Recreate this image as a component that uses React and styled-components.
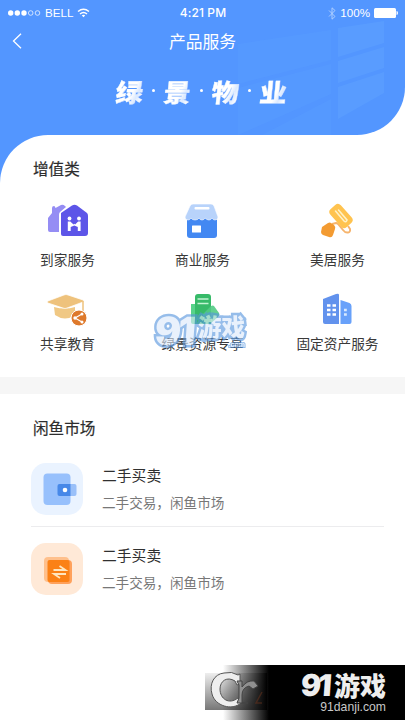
import styled, { createGlobalStyle } from "styled-components";

const GlobalStyle = createGlobalStyle`
  * {
    box-sizing: border-box;
    margin: 0;
    padding: 0;
  }

  body {
    background: #fff;
    color: #333;
    font-family: "Noto Sans CJK SC", sans-serif;
    overflow: hidden;
  }
`;

const Page = styled.main`
  position: relative;
  width: 405px;
  height: 720px;
  overflow: hidden;
  background: #fff;
`;

const Hero = styled.header`
  position: relative;
  height: 135px;
  background: #5396ff;
  border-bottom-right-radius: 48px;
  overflow: hidden;
  color: #fff;
`;

const WindowLight = styled.svg`
  position: absolute;
  inset: 0;
`;

const StatusBar = styled.div`
  position: relative;
  display: grid;
  grid-template-columns: 1fr auto 1fr;
  align-items: center;
  height: 26px;
  padding: 0 7px 0 8px;
  font: 12px/26px "Liberation Sans", sans-serif;
`;

const StatusGroup = styled.div`
  display: flex;
  align-items: center;
  justify-content: ${(props) => (props.$end ? "flex-end" : "flex-start")};
  gap: 4px;

  svg {
    flex: none;
  }
`;

const Carrier = styled.span`
  font-size: 11.6px;
`;

const Time = styled.span`
  font-family: Inter, sans-serif;
  font-size: 12px;
  font-weight: 500;
  letter-spacing: 0.1px;
`;

const NavBar = styled.nav`
  position: relative;
  display: grid;
  grid-template-columns: 40px 1fr 40px;
  align-items: center;
  height: 30px;
  text-align: center;
`;

const BackButton = styled.button`
  display: flex;
  padding-left: 12px;
  border: 0;
  background: none;
`;

const NavTitle = styled.h1`
  font-size: 16.8px;
  font-weight: 400;
  line-height: 30px;
`;

const Brand = styled.div`
  position: relative;
  display: flex;
  justify-content: center;
  align-items: center;
  height: 69px;
  padding-right: 2px;
`;

const BrandChar = styled.span`
  width: 27px;
  text-align: center;
  font-size: 25px;
  font-weight: 900;
  line-height: 36px;
  transform: skewX(-6deg) scaleX(1.08);
  background: linear-gradient(110deg, #fff 58%, #dbe9ff 72%, #fff 88%);
  background-clip: text;
  color: transparent;
  -webkit-text-stroke: 0.3px #ffffffb0;
`;

const BrandDot = styled.i`
  width: 3px;
  height: 3px;
  margin: 0 9px;
  border-radius: 50%;
  background: #fff;
`;

const CornerBack = styled.div`
  background: linear-gradient(90deg, #5396ff 50px, #fff 50px);
`;

const Services = styled.section`
  position: relative;
  height: 242px;
  padding-top: 21px;
  background: #fff;
  border-top-left-radius: 48px;
`;

const SectionTitle = styled.h2`
  padding-left: 33px;
  font-size: 15.6px;
  font-weight: 400;
  line-height: 24px;
  color: #2d2d2d;
  -webkit-text-stroke: 0.2px #2d2d2d;
`;

const ServiceGrid = styled.div`
  display: grid;
  grid-template-columns: repeat(3, 135px);
  grid-auto-rows: 89px;
  padding-top: 24px;
`;

const Service = styled.div`
  display: flex;
  flex-direction: column;
  align-items: center;

  svg {
    display: block;
    overflow: visible;
  }
`;

const ServiceLabel = styled.span`
  margin-top: ${(props) => (props.$tight ? "2px" : "7px")};
  font-size: 13.7px;
  line-height: 24px;
  white-space: nowrap;
  color: #393939;
`;

const Watermark = styled.div`
  position: absolute;
  left: 155px;
  top: 174px;
  display: flex;
  align-items: center;
  height: 44px;
  opacity: 0.62;
  color: #dceafb;
  font-weight: 900;
  paint-order: stroke fill;
  -webkit-text-stroke: 5px #5795de;
  line-height: 44px;
`;

const WatermarkNumber = styled.span`
  width: 43px;
  font-family: Inter, sans-serif;
  font-size: 39px;
  letter-spacing: -3px;
  transform: skewX(-4deg);
`;

const WatermarkName = styled.span`
  margin-top: -10px;
  font-size: 23.5px;
`;

const WatermarkUrl = styled.span`
  position: absolute;
  right: 0;
  bottom: 4px;
  font: 700 7px/8px "Liberation Sans", sans-serif;
  -webkit-text-stroke: 2px #5795de;
`;

const Band = styled.div`
  height: 17px;
  background: #f6f6f6;
`;

const Market = styled.section`
  padding-top: 21px;
`;

const MarketList = styled.ul`
  list-style: none;
  padding: 24px 21px 0 31px;
`;

const MarketItem = styled.li`
  display: flex;
  gap: 18px;
  height: 64px;

  &:not(:last-child) {
    border-bottom: 1px solid #ececee;
    margin-bottom: 16px;
  }
`;

const MarketIcon = styled.div`
  flex: none;
  width: 52px;
  height: 52px;
  border-radius: 15px;
  background: ${(props) => props.$color};

  svg {
    display: block;
  }
`;

const MarketText = styled.div`
  padding-left: 1px;
`;

const MarketName = styled.h3`
  font-size: 14.8px;
  font-weight: 400;
  line-height: 24px;
  color: #303030;
`;

const MarketNote = styled.p`
  padding-top: 3px;
  font-size: 13.6px;
  line-height: 24px;
  color: #777;
`;

const Banner = styled.aside`
  position: absolute;
  right: 0;
  bottom: 0;
  display: flex;
  justify-content: space-between;
  width: 200px;
  height: 55px;
  background: linear-gradient(90deg, #fff 18px, #000 64px);
`;

const BannerBrand = styled.div`
  display: flex;
  flex-direction: column;
  align-items: flex-end;
  padding: 5px 19px 0 0;
`;

const BannerName = styled.div`
  display: flex;
  align-items: center;
  height: 30px;
  color: #eee;
  font-size: 26px;
  font-weight: 900;
  line-height: 30px;

  b {
    margin-right: 5px;
    font: 900 30px/30px Inter, sans-serif;
    letter-spacing: -3px;
    transform: skewX(-4deg);
  }
`;

const BannerUrl = styled.div`
  font: 12.2px/14px "Liberation Sans", sans-serif;
  color: #c9c9c9;
`;

function HomeIcon() {
  return (
    <svg width="40" height="36" viewBox="0 0 40 36">
      <path d="M0 14 4 9V4q0-2 2-2 1 0 1.500 2L13 1q2-1 4 1l1 1-6 5q-1 1-1 3v17H2q-2 0-2-2Z" fill="#958df4" />
      <path d="M13 9 24 1.500q2.500-1.500 5 0L39 9q1 1 1 3v17q0 3-3 3H15q-2 0-2-2V12q0-2 0-3Z" fill="#5d55e8" />
      <g fill="#fff">
        <circle cx="21.500" cy="14.500" r="1.900" />
        <circle cx="31" cy="14.500" r="1.900" />
        <path d="M19.800 17.500h2.500l3.200 3 .8-.7.800.7 3-3h2.500V27h-2.800v-4l-3.500-1.500-3.600 1.500v4h-2.900Z" />
      </g>
    </svg>
  );
}

function ShopIcon() {
  return (
    <svg width="34" height="36" viewBox="1 0 34 36">
      <path d="M2 14h30v17q0 3-3 3H5q-3 0-3-3Z" fill="#4388f2" />
      <path d="M5 2q1-2 3-2h18q2 0 3 2l4 11q0 3-3 3-2 0-3-2-1 2-3 2t-4-2q-1 2-3 2t-3-2q-1 2-4 2t-4-2q-1 2-3 2-3 0-3-3Z" fill="#b8d3fb" stroke="#fff" strokeWidth=".6" />
      <rect x="9.500" y="3" width="15" height="2.500" rx="1" fill="#fff" />
      <rect x="7" y="21.500" width="9" height="7" rx=".5" fill="#fff" />
    </svg>
  );
}

function RollerIcon() {
  return (
    <svg width="34" height="36" viewBox="1 0 34 36">
      <path d="m12 20 4-1q1 0 2 1l5 6c3 4 8 3 7-1l-2-3" fill="none" stroke="#f6b46d" strokeWidth="1.900" />
      <path d="m2 23 6-4q2-1 3 0l3 2q2 2 1 4l-2 6q-1 3-4 2l-6-2q-2-1-2-3Z" fill="#f39b32" />
      <rect x="-7" y="-12" width="14" height="24" rx="4" transform="translate(21 12)rotate(-42)" fill="#ffc34f" />
      <path d="m15.500 7 8.500 10q2 2 3-1L18.500 6" fill="none" stroke="#fff1c5" strokeWidth="1.600" strokeLinecap="round" />
    </svg>
  );
}

function EducationIcon() {
  return (
    <svg width="40" height="36" viewBox="1 0 40 36">
      <path d="M7 14q11 3 21 0v8q-10 7-20 0Z" fill="#f0c884" />
      <path d="M1 8 17 2q2-1 4 0l15 5q2 1 0 2L20 15q-2 1-4 0L1 10q-2-1 0-2Z" fill="#eec27c" stroke="#fff" strokeWidth=".7" />
      <path d="M36 8v11" stroke="#eec27c" strokeWidth="1.500" />
      <circle cx="32" cy="25" r="8" fill="#de792b" stroke="#fff" />
      <path d="m35 21-7 4 7 4" fill="none" stroke="#fff" strokeWidth="1.200" />
      <g fill="#fff"><circle cx="35" cy="21" r="1.500" /><circle cx="28" cy="25" r="1.700" /><circle cx="35" cy="29" r="1.500" /></g>
    </svg>
  );
}

function ResourceIcon() {
  return (
    <svg width="34" height="36" viewBox="-5 -1 34 36">
      <path d="M0 10h5v20H2q-2 0-2-2Z" fill="#57d38a" />
      <path d="M4 3q0-3 3-3h10q3 0 3 3v27H4Z" fill="#37ba69" />
      <path d="M6.500 5h11M6.500 9.500h11" stroke="#c3f4d3" strokeWidth="1.700" />
      <path d="m12 20 8-8q2-1 3 0l5 7q1 2-1 4l-8 7h-7Z" fill="#52cb84" opacity=".9" />
    </svg>
  );
}

function BuildingIcon() {
  return (
    <svg width="34" height="36" viewBox="0 0 34 36">
      <path d="M2 6 15 1q3-1 3 1v29H4q-2 0-2-2Z" fill="#6292ed" />
      <path d="m19.500 7 9 3q2 1 2 3v16q0 2-2 2h-9Z" fill="#68a1fa" />
      <path d="M6 12.500h9M6 17h9M6 21.500h9" stroke="#fff" strokeWidth="2.300" strokeDasharray="3.500 2" />
      <path d="M23 17h2.800M23 21.500h2.800" stroke="#d9eafe" strokeWidth="2.300" />
    </svg>
  );
}

function WalletIcon() {
  return (
    <svg width="53" height="53" viewBox="0 0 53 53">
      <rect x="12.500" y="10.500" width="27" height="31.500" rx="4" fill="#97c0fc" />
      <rect x="27" y="21" width="18.500" height="12" rx="2" fill="#9ac0f9" />
      <path d="M28.500 21h11v12h-11q-2 0-2-2v-8q0-2 2-2Z" fill="#4788e8" />
      <circle cx="34" cy="27" r="2.300" fill="#fff" />
    </svg>
  );
}

function TradeIcon() {
  return (
    <svg width="53" height="53" viewBox="0 0 53 53">
      <rect x="13" y="14" width="25" height="25" rx="4" fill="#ffc08c" />
      <rect x="17" y="17" width="24" height="24" rx="4" fill="#ffa15b" />
      <rect x="16.500" y="17" width="22" height="22" rx="2" fill="#fb8116" />
      <path d="M22.500 27h12l-6-4M35 31H23l6 4" fill="none" stroke="#ffe6bf" strokeWidth="1.800" />
    </svg>
  );
}

function BannerMark() {
  return (
    <svg width="62" height="55" viewBox="0 0 62 55">
      <defs>
        <linearGradient id="markShade" x2="0" y2="1">
          <stop stopColor="#eee" />
          <stop offset="1" stopColor="#777" />
        </linearGradient>
        <linearGradient id="markFade">
          <stop stopColor="#000" stopOpacity="0" />
          <stop offset="1" stopColor="#000" />
        </linearGradient>
      </defs>
      <path d="M0 8h62v37H0Z" fill="url(#markShade)" />
      <path d="M17 8h45v37H17Z" fill="url(#markFade)" />
      <path d="M33 10Q27 6 19 8C9 9 4 19 7 29c3 12 20 17 29 9l-3-5c-9 7-18 1-18-9 0-8 7-13 15-8l2 4 3-1V9Z" fill="#eee" stroke="#555" />
      <path d="M32 16h5v6q5-7 12-6l4 5-5 3-4-3q-7 2-7 9v8h6H32l2-5V20Z" fill="#909090" stroke="#444" />
      <path d="m57 27-6 11h6" fill="none" stroke="#60301c" strokeWidth="1.500" opacity=".6" />
    </svg>
  );
}

const services = [
  { label: "到家服务", Icon: HomeIcon },
  { label: "商业服务", Icon: ShopIcon },
  { label: "美居服务", Icon: RollerIcon },
  { label: "共享教育", Icon: EducationIcon },
  { label: "绿景资源专享", Icon: ResourceIcon },
  { label: "固定资产服务", Icon: BuildingIcon },
];

const marketItems = [
  { id: 1, Icon: WalletIcon, color: "#eaf3ff" },
  { id: 2, Icon: TradeIcon, color: "#ffe9d7" },
];

function App() {
  return (
    <>
      <GlobalStyle />
      <Page>
        <Hero>
          <WindowLight width="405" height="135" fill="#66adff" fillOpacity=".3">
            <path d="M338 28 384 21v22l-46 14ZM338 61l46-14v21l-46 15ZM338 87l46-15v21l-46 26Z" />
            <path d="m238 44 93-14v30l-93 24ZM238 88l93-24v30l-93 41ZM262 135l69-36v36Z" fillOpacity=".15" />
          </WindowLight>
          <StatusBar>
            <StatusGroup>
              <svg width="33" height="8" fill="#fff" stroke="#fff">
                <g stroke="none"><circle cx="2.700" cy="4" r="2.700" /><circle cx="9.300" cy="4" r="2.700" /><circle cx="16" cy="4" r="2.700" /></g>
                <g fill="none" strokeWidth=".7"><circle cx="22.700" cy="4" r="2.300" /><circle cx="29.500" cy="4" r="2.300" /></g>
              </svg>
              <Carrier>BELL</Carrier>
              <svg width="13" height="10" viewBox="0 0 13 10" fill="none" stroke="#fff" strokeWidth="1.500">
                <path d="M1 3.500q5.500-4.500 11 0M3 6q3.500-3 7 0" />
                <path d="m4.800 7.500 1.700 1.800 1.700-1.800q-1.700-1.300-3.400 0Z" fill="#fff" stroke="none" />
              </svg>
            </StatusGroup>
            <Time>4:21 PM</Time>
            <StatusGroup $end>
              <svg width="8" height="13" viewBox="0 0 8 13" fill="none" stroke="#b6d3ff" strokeWidth=".9">
                <path d="m1 3.500 6 6-3 2.700V.8l3 2.700-6 6" />
              </svg>
              <Carrier>100%</Carrier>
              <svg width="24" height="10" viewBox="0 0 24 10" fill="#fff">
                <rect width="22" height="10" rx="1.500" />
                <path d="M22.500 3q1.500 0 1.500 2t-1.500 2Z" />
              </svg>
            </StatusGroup>
          </StatusBar>
          <NavBar>
            <BackButton>
              <svg width="11" height="16" fill="none" stroke="#fff" strokeWidth="1.300"><path d="M9 .7 1.500 8 9 15.300" /></svg>
            </BackButton>
            <NavTitle>产品服务</NavTitle>
          </NavBar>
          <Brand>
            <BrandChar>绿</BrandChar><BrandDot />
            <BrandChar>景</BrandChar><BrandDot />
            <BrandChar>物</BrandChar><BrandDot />
            <BrandChar>业</BrandChar>
          </Brand>
        </Hero>
        <CornerBack>
          <Services>
            <SectionTitle>增值类</SectionTitle>
            <ServiceGrid>
              {services.map(({ label, Icon }, index) => (
                <Service key={label}>
                  <Icon />
                  <ServiceLabel $tight={index > 2}>{label}</ServiceLabel>
                </Service>
              ))}
            </ServiceGrid>
            <Watermark>
              <WatermarkNumber>91</WatermarkNumber>
              <WatermarkName>游戏</WatermarkName>
              <WatermarkUrl>.com</WatermarkUrl>
            </Watermark>
          </Services>
        </CornerBack>
        <Band />
        <Market>
          <SectionTitle>闲鱼市场</SectionTitle>
          <MarketList>
            {marketItems.map(({ id, Icon, color }) => (
              <MarketItem key={id}>
                <MarketIcon $color={color}><Icon /></MarketIcon>
                <MarketText>
                  <MarketName>二手买卖</MarketName>
                  <MarketNote>二手交易，闲鱼市场</MarketNote>
                </MarketText>
              </MarketItem>
            ))}
          </MarketList>
        </Market>
        <Banner>
          <BannerMark />
          <BannerBrand>
            <BannerName><b>91</b>游戏</BannerName>
            <BannerUrl>91danji.com</BannerUrl>
          </BannerBrand>
        </Banner>
      </Page>
    </>
  );
}

export default App;
